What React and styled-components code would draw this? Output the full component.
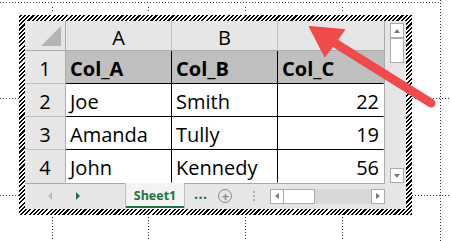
import styled, { createGlobalStyle } from 'styled-components';

const Global = createGlobalStyle`
  html, body { margin: 0; padding: 0; background: #fff; }
  body { font-family: "Open Sans", Lato, sans-serif; }
`;

const Page = styled.div`
  position: relative;
  width: 451px;
  height: 241px;
  overflow: hidden;
  padding: 15px 0 0 19px;
  box-sizing: border-box;
`;

const HDots = styled.div`
  position: absolute;
  height: 1px;
  background: repeating-linear-gradient(90deg, #333 0 1px, transparent 1px 3px);
`;

const VDots = styled.div`
  position: absolute;
  width: 1px;
  background: repeating-linear-gradient(180deg, #333 0 1px, transparent 1px 3px);
`;

const Frame = styled.div`
  width: 393px;
  height: 200px;
  box-sizing: border-box;
  padding: 6px;
  background: repeating-linear-gradient(-45deg, #000 0 1.5px, #fff 1.5px 3px);
`;

const Inner = styled.div`
  width: 100%;
  height: 100%;
  background: #e6e6e6;
  display: grid;
  grid-template-rows: 162px 26px;
`;

const Top = styled.div`
  display: flex;
`;

const Grid = styled.div`
  display: grid;
  grid-template-columns: 41px 106px 106px 106px;
  grid-template-rows: 30px 33px 33px 33px 33px;
  width: 360px;
  border-bottom: 1px solid #ababab;
  border-right: 1px solid #ababab;
  box-sizing: border-box;
  height: 163px;
`;

const Corner = styled.div`
  background: #e6e6e6;
  border-right: 1px solid #ababab;
  border-bottom: 1px solid #ababab;
  position: relative;
  &::after {
    content: '';
    position: absolute;
    right: 4px;
    bottom: 4px;
    border-style: solid;
    border-width: 0 0 20px 20px;
    border-color: transparent transparent #b4b4b4 transparent;
  }
`;

const ColHead = styled.div`
  background: #e6e6e6;
  border-right: 1px solid ${p => (p.$last ? 'transparent' : '#c0c0c0')};
  border-bottom: 1px solid #ababab;
  display: flex;
  align-items: center;
  justify-content: center;
  font-size: 20px;
  padding-top: 3px;
`;

const RowHead = styled.div`
  background: #e6e6e6;
  border-right: 1px solid #ababab;
  border-bottom: 1px solid ${p => (p.$last ? 'transparent' : '#c0c0c0')};
  display: flex;
  align-items: center;
  justify-content: center;
  font-size: 20px;
  padding-top: 3px;
`;

const Cell = styled.div`
  background: ${p => (p.$head ? '#bfbfbf' : '#fff')};
  border-right: 1px solid ${p => (p.$lastCol ? 'transparent' : '#000')};
  border-bottom: 1px solid ${p => (p.$lastRow ? 'transparent' : '#000')};
  display: flex;
  align-items: center;
  justify-content: ${p => (p.$num ? 'flex-end' : 'flex-start')};
  padding: 3px 4px 0 4px;
  font-size: 20px;
  font-weight: ${p => (p.$head ? 700 : 400)};
  color: #000;
  white-space: nowrap;
`;

const VScroll = styled.div`
  width: 22px;
  display: flex;
  flex-direction: column;
  align-items: center;
  padding: 2px 0 0 2px;
  box-sizing: border-box;
`;

const SBtn = styled.div`
  width: 14px;
  height: ${p => p.$h || 15}px;
  box-sizing: border-box;
  background: #fff;
  border: 1px solid #ababab;
  display: flex;
  align-items: center;
  justify-content: center;
  flex: none;
`;

const Track = styled.div`
  flex: 1;
`;

const TabBar = styled.div`
  display: flex;
  align-items: center;
  height: 26px;
  position: relative;
`;

const NavArrow = styled.div`
  width: 0;
  height: 0;
  border-top: 4px solid transparent;
  border-bottom: 4px solid transparent;
  ${p => (p.$dir === 'left'
    ? `border-right: 4px solid ${p.$color};`
    : `border-left: 4px solid ${p.$color};`)}
  margin-left: ${p => p.$ml}px;
`;

const Tab = styled.div`
  align-self: stretch;
  margin-left: 45px;
  width: 60px;
  background: #f3f3f3;
  border-left: 1px solid #c0c0c0;
  border-right: 1px solid #c0c0c0;
  box-sizing: border-box;
  display: flex;
  align-items: center;
  justify-content: center;
  color: #217346;
  font-weight: 700;
  font-size: 12.5px;
  position: relative;
  padding-bottom: 2px;
  &::after {
    content: '';
    position: absolute;
    left: 0;
    right: 0;
    bottom: 1px;
    height: 2px;
    background: #217346;
  }
`;

const More = styled.div`
  margin-left: 9px;
  color: #217346;
  font-weight: 700;
  font-size: 14px;
  letter-spacing: 0.5px;
  padding-bottom: 6px;
`;

const Plus = styled.div`
  margin-left: 11px;
  width: 14px;
  height: 14px;
  box-sizing: border-box;
  border: 1.5px solid #8a8a8a;
  border-radius: 50%;
  display: flex;
  align-items: center;
  justify-content: center;
  color: #8a8a8a;
  font-size: 13px;
  font-weight: 700;
  line-height: 1;
`;

const Sep = styled.div`
  margin-left: 21px;
  width: 2px;
  height: 11px;
  background: repeating-linear-gradient(180deg, #b0b0b0 0 2px, transparent 2px 4px);
`;

const HScroll = styled.div`
  margin-left: 15px;
  width: 115px;
  height: 15px;
  display: flex;
  background: #d8d8d8;
`;

const HThumb = styled.div`
  width: 31px;
  background: #fff;
  border: 1px solid #ababab;
  border-left: none;
  box-sizing: border-box;
`;

const Arrow = styled.svg`
  position: absolute;
  left: 0;
  top: 0;
`;

const rows = [
  ['Col_A', 'Col_B', 'Col_C'],
  ['Joe', 'Smith', '22'],
  ['Amanda', 'Tully', '19'],
  ['John', 'Kennedy', '56'],
];

const Tri = ({ dir, color = '#7a7a7a' }) => (
  <svg width="6" height="6" viewBox="0 0 6 6">
    {dir === 'up' && <path d="M0 5 L3 1 L6 5 Z" fill={color} />}
    {dir === 'down' && <path d="M0 1 L3 5 L6 1 Z" fill={color} />}
    {dir === 'left' && <path d="M5 0 L1 3 L5 6 Z" fill={color} />}
    {dir === 'right' && <path d="M1 0 L5 3 L1 6 Z" fill={color} />}
  </svg>
);

export default function App() {
  return (
    <>
      <Global />
      <Page>
        <HDots style={{ left: 0, top: 2, width: 441 }} />
        <VDots style={{ left: 440, top: 0, height: 241 }} />
        <VDots style={{ left: 52, top: 7, height: 4 }} />
        <VDots style={{ left: 148, top: 7, height: 4 }} />
        <VDots style={{ left: 245, top: 7, height: 4 }} />
        <VDots style={{ left: 342, top: 7, height: 4 }} />
        <HDots style={{ left: 0, top: 98, width: 19 }} />
        <HDots style={{ left: 0, top: 195, width: 19 }} />
        <HDots style={{ left: 412, top: 98, width: 39 }} />
        <HDots style={{ left: 412, top: 195, width: 39 }} />
        <VDots style={{ left: 52, top: 217, height: 24 }} />
        <VDots style={{ left: 148, top: 217, height: 24 }} />
        <VDots style={{ left: 245, top: 217, height: 24 }} />
        <VDots style={{ left: 342, top: 217, height: 24 }} />

        <Frame>
          <Inner>
            <Top>
              <Grid>
                <Corner />
                <ColHead>A</ColHead>
                <ColHead>B</ColHead>
                <ColHead $last>C</ColHead>
                {rows.map((r, i) => (
                  <>
                    <RowHead key={`h${i}`} $last={i === 3}>{i + 1}</RowHead>
                    {r.map((v, j) => (
                      <Cell
                        key={`${i}-${j}`}
                        $head={i === 0}
                        $num={j === 2 && i > 0}
                        $lastCol={j === 2}
                        $lastRow={i === 3}
                      >
                        {v}
                      </Cell>
                    ))}
                  </>
                ))}
              </Grid>
              <VScroll>
                <SBtn><Tri dir="up" /></SBtn>
                <SBtn $h={25} />
                <Track />
                <SBtn $h={15}><Tri dir="down" /></SBtn>
              </VScroll>
            </Top>
            <TabBar>
              <NavArrow $dir="left" $color="#bcbcbc" $ml={23} />
              <NavArrow $dir="right" $color="#217346" $ml={24} />
              <Tab>Sheet1</Tab>
              <More>...</More>
              <Plus>+</Plus>
              <Sep />
              <HScroll>
                <SBtn><Tri dir="left" /></SBtn>
                <HThumb />
                <Track />
                <SBtn><Tri dir="right" /></SBtn>
              </HScroll>
            </TabBar>
          </Inner>
        </Frame>

        <Arrow width="451" height="241" viewBox="0 0 451 241">
          <line x1="431" y1="103" x2="330" y2="40" stroke="#f04a4a" strokeWidth="9" strokeLinecap="round" />
          <path d="M310 27 L344 30 L325 56 Z" fill="#f04a4a" stroke="#f04a4a" strokeWidth="2" strokeLinejoin="round" />
        </Arrow>
      </Page>
    </>
  );
}
